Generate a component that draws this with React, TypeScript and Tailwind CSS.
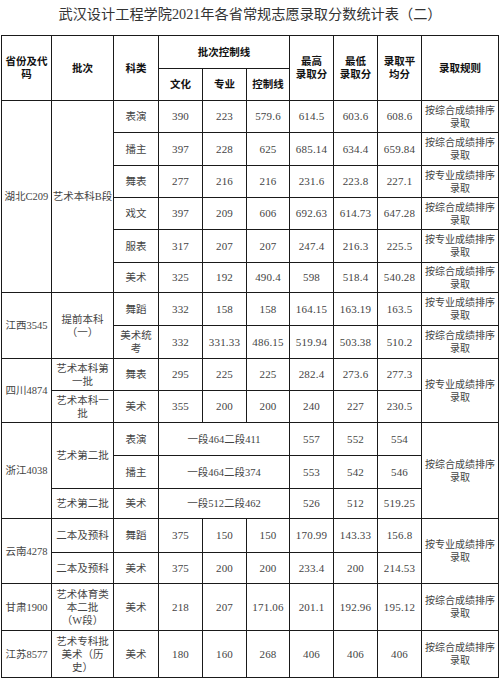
import React from "react";

const B = "border-[1.5px] border-[#1a1a1a] text-center align-middle p-0";
const H = `${B} font-bold text-[10.5px] leading-[13px] text-[#111]`;
const T = `${B} text-[10.5px] leading-[13px] text-[#444]`;
const N = `${B} text-[11px] leading-[13px] text-[#444] tracking-[0.2px]`;

const ZH = "按综合成绩排序";
const ZY = "按专业成绩排序";

function Nums({ v }: { v: string[] }) {
  return (
    <>
      {v.map((x, i) => (
        <td key={i} className={N}>
          {x}
        </td>
      ))}
    </>
  );
}

function Rule({ t, rs }: { t: string; rs?: number }) {
  return (
    <td rowSpan={rs} className={`${B} text-[10px] leading-[13px] text-[#444] whitespace-nowrap`}>
      {t}
      <br />
      录取
    </td>
  );
}

export default function App() {
  return (
    <div
      className="w-[500px] h-[679px] bg-white overflow-hidden"
      style={{ fontFamily: '"Liberation Serif", "Noto Sans CJK SC", serif' }}
    >
      <div className="h-[35px] flex items-center justify-center pb-[5px] text-[14.2px] text-[#333]">
        武汉设计工程学院2021年各省常规志愿录取分数统计表（二）
      </div>
      <table className="ml-[1px] w-[497px] table-fixed border-collapse border-[1.5px] border-[#1a1a1a]">
        <colgroup>
          <col className="w-[50px]" />
          <col className="w-[62px]" />
          <col className="w-[45px]" />
          <col className="w-[44px]" />
          <col className="w-[44px]" />
          <col className="w-[43px]" />
          <col className="w-[44px]" />
          <col className="w-[44px]" />
          <col className="w-[44px]" />
          <col className="w-[77px]" />
        </colgroup>
        <tbody>
          <tr className="h-[33px]">
            <td rowSpan={2} className={`${H} px-[3px]`}>省份及代码</td>
            <td rowSpan={2} className={H}>批次</td>
            <td rowSpan={2} className={H}>科类</td>
            <td colSpan={3} className={H}>批次控制线</td>
            <td rowSpan={2} className={H}>最高<br />录取分</td>
            <td rowSpan={2} className={H}>最低<br />录取分</td>
            <td rowSpan={2} className={H}>录取平<br />均分</td>
            <td rowSpan={2} className={H}>录取规则</td>
          </tr>
          <tr className="h-[32px]">
            <td className={H}>文化</td>
            <td className={H}>专业</td>
            <td className={H}>控制线</td>
          </tr>

          <tr className="h-[32px]">
            <td rowSpan={6} className={T}>湖北C209</td>
            <td rowSpan={6} className={T}>艺术本科B段</td>
            <td className={T}>表演</td>
            <Nums v={["390", "223", "579.6", "614.5", "603.6", "608.6"]} />
            <Rule t={ZH} />
          </tr>
          <tr className="h-[33px]">
            <td className={T}>播主</td>
            <Nums v={["397", "228", "625", "685.14", "634.4", "659.84"]} />
            <Rule t={ZH} />
          </tr>
          <tr className="h-[32px]">
            <td className={T}>舞表</td>
            <Nums v={["277", "216", "216", "231.6", "223.8", "227.1"]} />
            <Rule t={ZY} />
          </tr>
          <tr className="h-[32px]">
            <td className={T}>戏文</td>
            <Nums v={["397", "209", "606", "692.63", "614.73", "647.28"]} />
            <Rule t={ZH} />
          </tr>
          <tr className="h-[33px]">
            <td className={T}>服表</td>
            <Nums v={["317", "207", "207", "247.4", "216.3", "225.5"]} />
            <Rule t={ZY} />
          </tr>
          <tr className="h-[30px]">
            <td className={T}>美术</td>
            <Nums v={["325", "192", "490.4", "598", "518.4", "540.28"]} />
            <Rule t={ZH} />
          </tr>

          <tr className="h-[33px]">
            <td rowSpan={2} className={T}>江西3545</td>
            <td rowSpan={2} className={T}>提前本科<br />（一）</td>
            <td className={T}>舞蹈</td>
            <Nums v={["332", "158", "158", "164.15", "163.19", "163.5"]} />
            <Rule t={ZY} />
          </tr>
          <tr className="h-[33px]">
            <td className={`${T} px-[2px]`}>美术统考</td>
            <Nums v={["332", "331.33", "486.15", "519.94", "503.38", "510.2"]} />
            <Rule t={ZH} />
          </tr>

          <tr className="h-[32px]">
            <td rowSpan={2} className={T}>四川4874</td>
            <td className={`${T} px-[4px]`}>艺术本科第一批</td>
            <td className={T}>舞表</td>
            <Nums v={["295", "225", "225", "282.4", "273.6", "277.3"]} />
            <Rule t={ZY} rs={2} />
          </tr>
          <tr className="h-[32px]">
            <td className={`${T} px-[4px]`}>艺术本科一批</td>
            <td className={T}>美术</td>
            <Nums v={["355", "200", "200", "240", "227", "230.5"]} />
          </tr>

          <tr className="h-[33px]">
            <td rowSpan={3} className={T}>浙江4038</td>
            <td rowSpan={2} className={T}>艺术第二批</td>
            <td className={T}>表演</td>
            <td colSpan={3} className={T}>一段464二段411</td>
            <Nums v={["557", "552", "554"]} />
            <Rule t={ZH} rs={3} />
          </tr>
          <tr className="h-[33px]">
            <td className={T}>播主</td>
            <td colSpan={3} className={T}>一段464二段374</td>
            <Nums v={["553", "542", "546"]} />
          </tr>
          <tr className="h-[30px]">
            <td className={T}>艺术第二批</td>
            <td className={T}>美术</td>
            <td colSpan={3} className={T}>一段512二段462</td>
            <Nums v={["526", "512", "519.25"]} />
          </tr>

          <tr className="h-[34px]">
            <td rowSpan={2} className={T}>云南4278</td>
            <td className={T}>二本及预科</td>
            <td className={T}>舞蹈</td>
            <Nums v={["375", "150", "150", "170.99", "143.33", "156.8"]} />
            <Rule t={ZY} rs={2} />
          </tr>
          <tr className="h-[31px]">
            <td className={T}>二本及预科</td>
            <td className={T}>美术</td>
            <Nums v={["375", "200", "200", "233.4", "200", "214.53"]} />
          </tr>

          <tr className="h-[47px]">
            <td className={T}>甘肃1900</td>
            <td className={T}>艺术体育类<br />本二批<br />（W段）</td>
            <td className={T}>美术</td>
            <Nums v={["218", "207", "171.06", "201.1", "192.96", "195.12"]} />
            <Rule t={ZH} />
          </tr>
          <tr className="h-[47px]">
            <td className={T}>江苏8577</td>
            <td className={T}>艺术专科批<br />美术（历<br />史）</td>
            <td className={T}>美术</td>
            <Nums v={["180", "160", "268", "406", "406", "406"]} />
            <Rule t={ZH} />
          </tr>
        </tbody>
      </table>
    </div>
  );
}
